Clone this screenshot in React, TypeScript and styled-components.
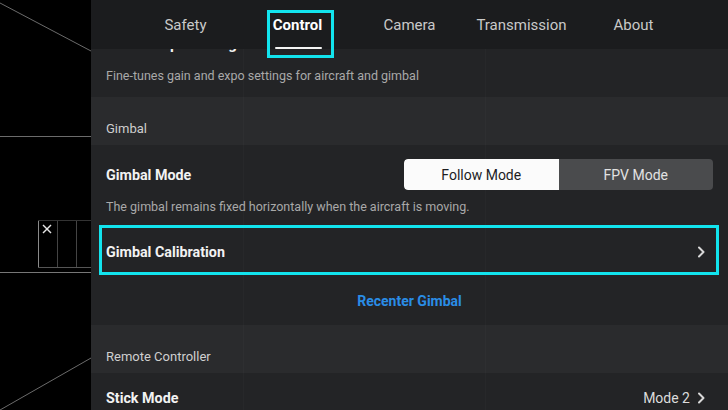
import React from "react";
import styled, { createGlobalStyle } from "styled-components";

const GlobalStyle = createGlobalStyle`
  html, body {
    margin: 0;
    padding: 0;
    background: #000;
  }
  body {
    font-family: Roboto, "Noto Sans", "Liberation Sans", sans-serif;
    -webkit-font-smoothing: antialiased;
  }
`;

const tabs = ["Safety", "Control", "Camera", "Transmission", "About"];

const CameraOverlay = () => (
  <svg width="91" height="410" viewBox="0 0 91 410">
    <g stroke="#6b6b6b" strokeWidth="1" fill="none">
      <line x1="0" y1="3" x2="91" y2="51" />
      <line x1="0" y1="136.5" x2="91" y2="136.5" />
      <line x1="38.5" y1="220" x2="38.5" y2="267" stroke="#8a8a8a" />
      <line x1="57.5" y1="220" x2="57.5" y2="267" stroke="#444" />
      <line x1="76.5" y1="220" x2="76.5" y2="267" stroke="#444" />
      <line x1="38" y1="220.5" x2="91" y2="220.5" stroke="#333" />
      <line x1="38" y1="267.5" x2="91" y2="267.5" stroke="#555" />
      <line x1="0" y1="272.5" x2="91" y2="272.5" stroke="#777" />
      <line x1="0" y1="410" x2="91" y2="358" />
    </g>
    <g stroke="#e6e6e6" strokeWidth="1.4">
      <line x1="43" y1="225" x2="51" y2="233" />
      <line x1="51" y1="225" x2="43" y2="233" />
    </g>
  </svg>
);

const Chevron = () => (
  <svg width="10" height="12" viewBox="0 0 10 12">
    <path d="M3 1.5 L7.5 6 L3 10.5" stroke="#d8d8d8" strokeWidth="2" fill="none" strokeLinecap="round" strokeLinejoin="round" />
  </svg>
);

export default function App() {
  return (
    <>
      <GlobalStyle />
      <Screen>
        <Canvas>
          <CameraOverlay />
        </Canvas>
        <Panel>
          <Nav>
            {tabs.map((t) => (
              <Tab key={t} active={t === "Control"}>
                {t}
              </Tab>
            ))}
          </Nav>
          <Content>
            <Scroller>
              <IntroBlock>
                <Title>Gain &amp; Expo Tuning</Title>
                <Desc>Fine-tunes gain and expo settings for aircraft and gimbal</Desc>
              </IntroBlock>

              <SectionHeader>Gimbal</SectionHeader>

              <SettingBlock>
                <SettingLine>
                  <Label>Gimbal Mode</Label>
                  <Segmented>
                    <Segment selected>Follow Mode</Segment>
                    <Segment>FPV Mode</Segment>
                  </Segmented>
                </SettingLine>
                <Desc>The gimbal remains fixed horizontally when the aircraft is moving.</Desc>
              </SettingBlock>

              <Row highlighted>
                <Label>Gimbal Calibration</Label>
                <Chevron />
              </Row>

              <ActionRow>Recenter Gimbal</ActionRow>

              <SectionHeader>Remote Controller</SectionHeader>

              <Row>
                <Label>Stick Mode</Label>
                <Value>
                  Mode 2 <Chevron />
                </Value>
              </Row>
            </Scroller>
          </Content>
        </Panel>
      </Screen>
    </>
  );
}

const Screen = styled.div`
  display: flex;
  width: 728px;
  height: 410px;
  overflow: hidden;
  background: #000;
`;

const Canvas = styled.div`
  width: 91px;
  flex-shrink: 0;
  display: flex;
`;

const Panel = styled.div`
  flex: 1;
  display: flex;
  flex-direction: column;
  background: #232426;
  min-width: 0;
`;

const Nav = styled.nav`
  height: 49px;
  flex-shrink: 0;
  display: flex;
  justify-content: center;
  background: #1b1c1e;
  position: relative;
  z-index: 2;
`;

const Tab = styled.div<{ active?: boolean }>`
  width: 112px;
  display: flex;
  align-items: center;
  justify-content: center;
  padding-top: 1px;
  font-size: 15px;
  font-weight: ${(p) => (p.active ? 700 : 400)};
  color: ${(p) => (p.active ? "#ffffff" : "#c9c9c9")};
  position: relative;

  ${(p) =>
    p.active &&
    `
    &::before {
      content: "";
      position: absolute;
      left: 50%;
      bottom: 0;
      width: 47px;
      height: 2.5px;
      margin-left: -23px;
      background: #f4f4f4;
      border-radius: 1px;
    }
    &::after {
      content: "";
      position: absolute;
      left: 50%;
      top: 10px;
      width: 67px;
      height: 48px;
      margin-left: -31px;
      box-sizing: border-box;
      border: 3.5px solid #12e4ee;
    }
  `}
`;

const Content = styled.div`
  flex: 1;
  overflow: hidden;
  position: relative;
  background-image: linear-gradient(
      to right,
      transparent 152px,
      rgba(255, 255, 255, 0.018) 152px,
      rgba(255, 255, 255, 0.018) 153px,
      transparent 153px
    ),
    linear-gradient(
      to right,
      transparent 394px,
      rgba(255, 255, 255, 0.018) 394px,
      rgba(255, 255, 255, 0.018) 395px,
      transparent 395px
    );
`;

/* scrolled slightly so the first title sits under the tab bar */
const Scroller = styled.div`
  display: flex;
  flex-direction: column;
  margin-top: -14px;
`;

const IntroBlock = styled.div`
  padding: 0 15px 13px;
  display: flex;
  flex-direction: column;
  gap: 15px;
`;

const Title = styled.div`
  font-size: 15px;
  line-height: 18px;
  font-weight: 700;
  color: #f2f2f2;
`;

const Desc = styled.div`
  font-size: 12.5px;
  line-height: 16px;
  color: #a9a9a9;
`;

const SectionHeader = styled.div`
  height: 48px;
  box-sizing: border-box;
  padding: 24px 15px 0;
  font-size: 13px;
  line-height: 16px;
  color: #cfcfcf;
  background: rgba(255, 255, 255, 0.035);
`;

const SettingBlock = styled.div`
  padding: 14px 15px 10px;
  display: flex;
  flex-direction: column;
  gap: 9px;
`;

const SettingLine = styled.div`
  display: flex;
  align-items: center;
  justify-content: space-between;
`;

const Label = styled.div`
  font-size: 14.3px;
  font-weight: 700;
  color: #f2f2f2;
`;

const Segmented = styled.div`
  display: flex;
  width: 309px;
  height: 31px;
  border-radius: 4px;
  overflow: hidden;
  background: #4a4b4d;
`;

const Segment = styled.div<{ selected?: boolean }>`
  flex: 1;
  display: flex;
  align-items: center;
  justify-content: center;
  font-size: 14px;
  color: ${(p) => (p.selected ? "#1d1d1f" : "#e2e2e2")};
  background: ${(p) => (p.selected ? "#fbfbfb" : "transparent")};
  border-radius: ${(p) => (p.selected ? "4px 0 0 4px" : "0")};
`;

const Row = styled.div<{ highlighted?: boolean }>`
  height: 50px;
  display: flex;
  align-items: center;
  justify-content: space-between;
  padding: ${(p) => (p.highlighted ? "4px" : "0")} 22px 0 15px;
  box-sizing: border-box;
  position: relative;

  ${(p) =>
    p.highlighted &&
    `
    &::after {
      content: "";
      position: absolute;
      left: 8px;
      right: 9px;
      top: 0;
      bottom: 0;
      box-sizing: border-box;
      border: 3.5px solid #12e4ee;
    }
  `}
`;

const Value = styled.div`
  display: flex;
  align-items: center;
  gap: 6px;
  font-size: 14px;
  color: #dcdcdc;
`;

const ActionRow = styled.div`
  height: 50px;
  display: flex;
  align-items: center;
  justify-content: center;
  padding-top: 1px;
  box-sizing: border-box;
  font-size: 14px;
  font-weight: 700;
  color: #2a8de6;
`;
